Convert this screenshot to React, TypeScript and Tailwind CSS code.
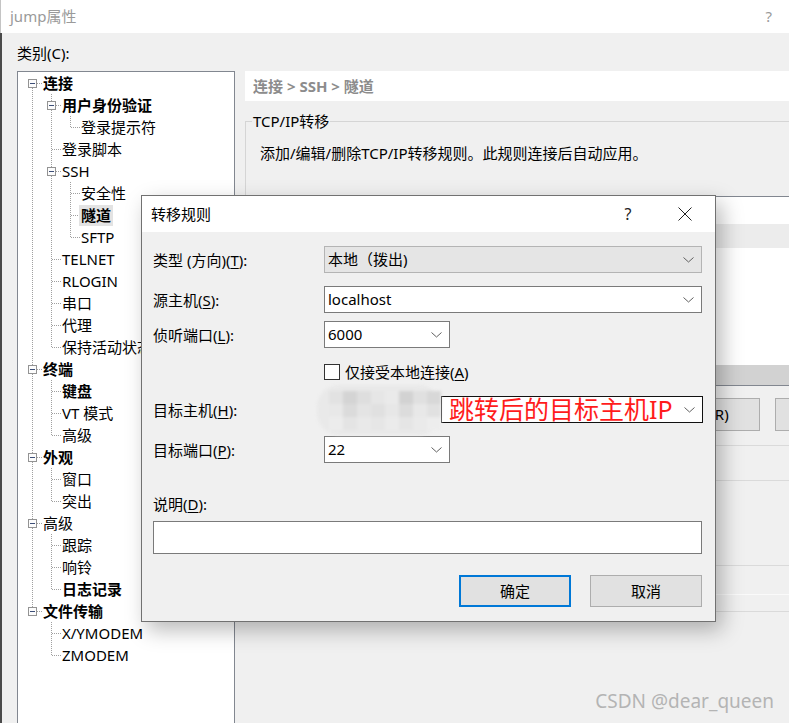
type Node = { label: string; depth: number; bold?: boolean; expand?: boolean; selected?: boolean }

const TREE: Node[] = [
  { label: '连接', depth: 0, bold: true, expand: true },
  { label: '用户身份验证', depth: 1, bold: true, expand: true },
  { label: '登录提示符', depth: 2 },
  { label: '登录脚本', depth: 1 },
  { label: 'SSH', depth: 1, expand: true },
  { label: '安全性', depth: 2 },
  { label: '隧道', depth: 2, bold: true, selected: true },
  { label: 'SFTP', depth: 2 },
  { label: 'TELNET', depth: 1 },
  { label: 'RLOGIN', depth: 1 },
  { label: '串口', depth: 1 },
  { label: '代理', depth: 1 },
  { label: '保持活动状态', depth: 1 },
  { label: '终端', depth: 0, bold: true, expand: true },
  { label: '键盘', depth: 1, bold: true },
  { label: 'VT 模式', depth: 1 },
  { label: '高级', depth: 1 },
  { label: '外观', depth: 0, bold: true, expand: true },
  { label: '窗口', depth: 1 },
  { label: '突出', depth: 1 },
  { label: '高级', depth: 0, expand: true },
  { label: '跟踪', depth: 1 },
  { label: '响铃', depth: 1 },
  { label: '日志记录', depth: 1, bold: true },
  { label: '文件传输', depth: 0, bold: true, expand: true },
  { label: 'X/YMODEM', depth: 1 },
  { label: 'ZMODEM', depth: 1 },
]

const DOT = '#a0a0a0'

// true when a later row sits at `level` before the tree climbs above it
function hasLaterSibling(i: number, level: number) {
  for (let j = i + 1; j < TREE.length; j++) {
    if (TREE[j].depth < level) return false
    if (TREE[j].depth === level) return true
  }
  return false
}

function GuideCell({ own, cont, first, expand }: { own: boolean; cont: boolean; first: boolean; expand?: boolean }) {
  return (
    <svg width="19" height="22" className="shrink-0" shapeRendering="crispEdges">
      {own ? (
        <>
          {!first && cont && <line x1="9.5" y1="0" x2="9.5" y2="22" stroke={DOT} strokeDasharray="1 1" />}
          {!first && !cont && <line x1="9.5" y1="0" x2="9.5" y2="12" stroke={DOT} strokeDasharray="1 1" />}
          {first && cont && <line x1="9.5" y1="12" x2="9.5" y2="22" stroke={DOT} strokeDasharray="1 1" />}
          <line x1="10" y1="11.5" x2="19" y2="11.5" stroke={DOT} strokeDasharray="1 1" />
          {expand && (
            <>
              <rect x="5.5" y="7.5" width="8" height="8" fill="#fcfcfc" stroke="#939393" />
              <line x1="7" y1="11.5" x2="12" y2="11.5" stroke="#3d4f78" />
            </>
          )}
        </>
      ) : cont ? (
        <line x1="9.5" y1="0" x2="9.5" y2="22" stroke={DOT} strokeDasharray="1 1" />
      ) : null}
    </svg>
  )
}

function TreeRow({ node, i }: { node: Node; i: number }) {
  const cells = []
  for (let l = 0; l <= node.depth; l++) {
    cells.push(
      <GuideCell
        key={l}
        own={l === node.depth}
        cont={hasLaterSibling(i, l)}
        first={i === 0}
        expand={l === node.depth ? node.expand : false}
      />
    )
  }
  return (
    <div className="flex items-center h-[22px]">
      {cells}
      <span
        className={`ml-[-1px] px-[2px] h-[21px] mt-[1px] leading-[20px] text-[15px] whitespace-nowrap ${node.bold ? 'font-bold' : ''} ${node.selected ? 'bg-[#e3e3e3]' : ''}`}
      >
        {node.label}
      </span>
    </div>
  )
}

function Chevron() {
  return (
    <svg width="11" height="6" className="shrink-0">
      <polyline points="0.5,0.5 5.5,5 10.5,0.5" fill="none" stroke="#5f5f5f" />
    </svg>
  )
}

function Combo({ className, value }: { className: string; value: string }) {
  return (
    <div className={`h-[27px] flex items-center justify-between pl-[3px] pr-[7px] text-[15px] ${className}`}>
      <span>{value}</span>
      <Chevron />
    </div>
  )
}

function Label({ pre, k }: { pre: string; k: string }) {
  return (
    <span className="text-[15px] whitespace-nowrap">
      {pre}(<span className="underline underline-offset-[2px]">{k}</span>):
    </span>
  )
}

const MOSAIC = [
  ['#e2e2e2', '#d4d4d4', '#dedede', '#e6e6e6', '#eaeaea', '#d2d2d2', '#e0e0e0', '#d8d8d8'],
  ['#e8e8e8', '#dbdbdb', '#e4e4e4', '#e0e0e0', '#e7e7e7', '#dcdcdc', '#e8e8e8', '#e1e1e1'],
  ['#ececec', '#e4e4e4', '#e9e9e9', '#e6e6e6', '#ebebeb', '#e5e5e5', '#eaeaea', '#ededed'],
]

function Mosaic() {
  return (
    <div className="w-[124px] h-[50px] shrink-0 rounded-[22px] bg-[#e9e9e9] blur-[1.5px] flex flex-col justify-center pl-[12px] pt-[2px]">
      {MOSAIC.map((row, r) => (
        <div key={r} className="flex">
          {row.map((c, k) => (
            <div key={k} className="w-[14px] h-[13px]" style={{ background: c }} />
          ))}
        </div>
      ))}
    </div>
  )
}

function Dialog() {
  return (
    <div className="absolute left-[141px] top-[195px] w-[575px] h-[427px] border border-[#717171] bg-[#f0f0f0] shadow-[6px_8px_20px_rgba(0,0,0,0.28)] flex flex-col">
      <div className="h-[36px] shrink-0 bg-white flex items-center">
        <span className="flex-1 pl-[9px] text-[15px]">转移规则</span>
        <span className="w-[54px] text-center text-[16px] text-[#222]">?</span>
        <span className="w-[60px] flex justify-center">
          <svg width="14" height="14">
            <line x1="0.5" y1="0.5" x2="13.5" y2="13.5" stroke="#222" />
            <line x1="13.5" y1="0.5" x2="0.5" y2="13.5" stroke="#222" />
          </svg>
        </span>
      </div>

      <div className="pl-[11px] flex flex-col">
        <div className="mt-[14px] flex items-center h-[27px]">
          <div className="w-[171px]"><Label pre="类型 (方向)" k="T" /></div>
          <Combo className="w-[378px] bg-[#e5e5e5] border border-[#b4b4b4]" value="本地（拨出)" />
        </div>

        <div className="mt-[13px] flex items-center h-[27px]">
          <div className="w-[171px]"><Label pre="源主机" k="S" /></div>
          <Combo className="w-[378px] bg-white border border-[#7a7a7a]" value="localhost" />
        </div>

        <div className="mt-[8px] flex items-center h-[27px]">
          <div className="w-[171px]"><Label pre="侦听端口" k="L" /></div>
          <Combo className="w-[126px] bg-white border border-[#7a7a7a]" value="6000" />
        </div>

        <div className="mt-[16px] flex items-center h-[16px] pl-[171px]">
          <div className="w-[16px] h-[16px] bg-white border border-[#333]" />
          <span className="ml-[5px] text-[15px] whitespace-nowrap">
            仅接受本地连接(<span className="underline underline-offset-[2px]">A</span>)
          </span>
        </div>

        <div className="mt-[16px] flex items-center h-[27px]">
          <div className="w-[164px]"><Label pre="目标主机" k="H" /></div>
          <Mosaic />
          <div className="w-[262px] h-[27px] bg-white border border-[#111] flex items-center justify-between pl-[7px] pr-[7px]">
            <span className="text-[25px] leading-none text-[#ff1c1c] whitespace-nowrap">跳转后的目标主机IP</span>
            <Chevron />
          </div>
        </div>

        <div className="mt-[13px] flex items-center h-[27px]">
          <div className="w-[171px]"><Label pre="目标端口" k="P" /></div>
          <Combo className="w-[126px] bg-white border border-[#7a7a7a]" value="22" />
        </div>

        <div className="mt-[31px] h-[20px] leading-[20px]">
          <Label pre="说明" k="D" />
        </div>

        <div className="mt-[7px] w-[549px] h-[33px] bg-white border border-[#7a7a7a]" />

        <div className="mt-[21px] w-[549px] flex justify-end gap-[19px]">
          <button className="w-[112px] h-[32px] bg-[#e1e1e1] border-2 border-[#0078d7] text-[15px]">确定</button>
          <button className="w-[112px] h-[32px] bg-[#e1e1e1] border border-[#adadad] text-[15px]">取消</button>
        </div>
      </div>
    </div>
  )
}

export default function App() {
  return (
    <div className="relative w-[789px] h-[723px] overflow-hidden bg-[#f0f0f0] text-black font-['Noto_Sans','Noto_Sans_CJK_SC',sans-serif]">
      {/* window title */}
      <div className="h-[33px] bg-white flex items-center justify-between border-l border-[#c4c4c4]">
        <span className="pl-[9px] text-[15px] text-[#9a9a9a]">jump属性</span>
        <span className="pr-[17px] text-[15px] text-[#9a9a9a]">?</span>
      </div>

      <div className="flex h-[690px]">
        <div className="w-[2px] shrink-0 bg-[#4b4b4b]" />
        <div className="pl-[15px] pt-[10px] flex flex-col">
          <div className="h-[20px] leading-[20px] text-[15px]">类别(C):</div>

          <div className="flex mt-[8px] gap-[10px]">
            {/* category tree */}
            <div className="w-[218px] h-[680px] shrink-0 bg-white border border-[#828790] pl-[5px]">
              {TREE.map((n, i) => (
                <TreeRow key={i} node={n} i={i} />
              ))}
            </div>

            {/* settings page */}
            <div className="w-[570px] shrink-0 flex flex-col">
              <div className="h-[30px] bg-white flex items-center pl-[8px] text-[15px] font-bold text-[#8c8c8c]">
                连接 &gt; SSH &gt; 隧道
              </div>
              <fieldset className="mt-[10px] border-t border-l border-[#d5d5d5] p-0 m-0">
                <legend className="ml-[6px] px-[1px] text-[15px] leading-[20px]">TCP/IP转移</legend>
                <div className="pl-[14px] mt-[12px] text-[15px] leading-[20px]">
                  添加/编辑/删除TCP/IP转移规则。此规则连接后自动应用。
                </div>
                <div className="ml-[14px] mt-[33px] h-[190px] border border-[#828790] bg-white flex flex-col">
                  <div className="h-[27px]" />
                  <div className="h-[24px] bg-[#ececec]" />
                  <div className="flex-1" />
                  <div className="h-[20px] bg-[#d2d2d2]" />
                </div>
                <div className="ml-[25px] mt-[12px] flex gap-[15px]">
                  {['', '', '', '删除(R)', ''].map((b, k) => (
                    <button key={k} className="w-[111px] h-[33px] shrink-0 bg-[#e1e1e1] border border-[#adadad] text-[15px]">
                      {b}
                    </button>
                  ))}
                </div>
                <div className="mt-[14px] border-t border-[#dadada]" />
                <div className="mt-[34px] border-t border-[#dadada]" />
                <div className="mt-[84px] border-t border-[#dadada]" />
                <div className="mt-[28px] border-t border-[#fafafa]" />
                <div className="mt-[16px] border-t border-[#dadada]" />
              </fieldset>
            </div>
          </div>
        </div>
      </div>

      <Dialog />

      <div className="absolute right-[15px] bottom-[10px] text-[19px] leading-[24px] text-[#b4b4b4]">CSDN @dear_queen</div>
    </div>
  )
}
